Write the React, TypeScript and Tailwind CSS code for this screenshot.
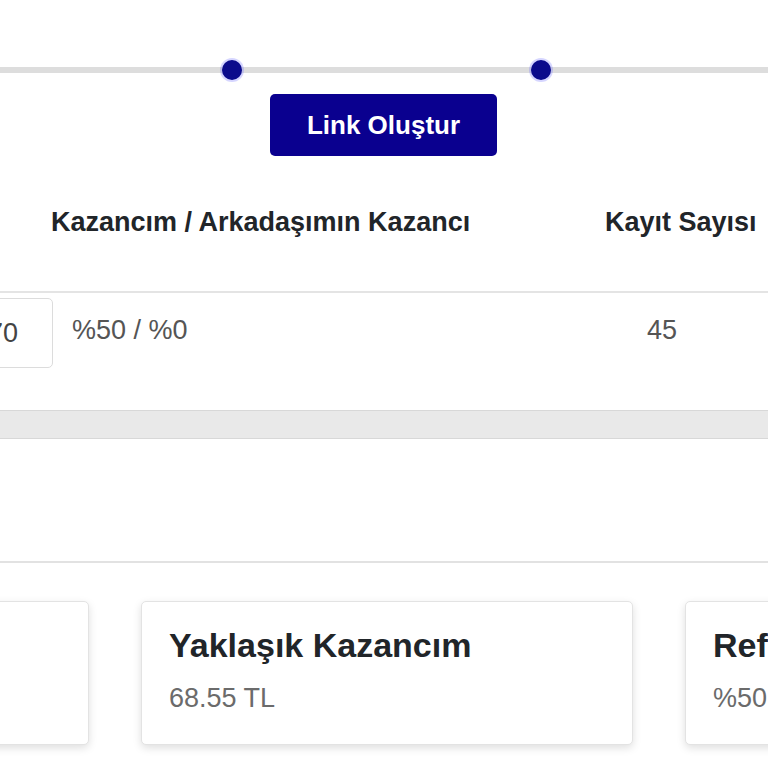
import React from "react";

export default function App() {
  return (
    <div
      className="w-[768px] h-[768px] overflow-hidden bg-white"
      style={{ fontFamily: '"Liberation Sans", Arial, sans-serif' }}
    >
      {/* slider */}
      <div className="pt-[67px]">
        <div className="relative h-[6px] bg-[#dddddd]">
          <span className="absolute left-[222px] top-[-7px] w-5 h-5 rounded-full bg-[#0b0b8c] shadow-[0_0_0_2px_rgba(90,90,255,0.25)]" />
          <span className="absolute left-[531px] top-[-7px] w-5 h-5 rounded-full bg-[#0b0b8c] shadow-[0_0_0_2px_rgba(90,90,255,0.25)]" />
        </div>
      </div>

      {/* button */}
      <div className="mt-[21px] flex justify-center">
        <button className="w-[227px] h-[62px] ml-[-1px] rounded-[5px] bg-[#0a008f] text-white font-bold text-[26px] leading-none">
          Link Oluştur
        </button>
      </div>

      {/* table header */}
      <div className="flex pl-[51px] pt-[50px] pb-[53px] text-[27px] leading-[32px] font-bold text-[#212529] whitespace-nowrap">
        <div className="w-[554px] shrink-0">Kazancım / Arkadaşımın Kazancı</div>
        <div className="shrink-0">Kayıt Sayısı</div>
      </div>
      <div className="h-[2px] bg-[#e4e4e4]" />

      {/* table row */}
      <div className="flex items-start h-[117px] whitespace-nowrap text-[27px] leading-[40px] text-[#555555]">
        <div className="shrink-0 ml-[-60px] mt-[5px] w-[113px] h-[70px] rounded-[5px] border border-[#dcdcdc] flex items-center pl-[47px] text-[#444]">
          70
        </div>
        <div className="shrink-0 ml-[19px] mt-[17px] w-[575px]">%50 / %0</div>
        <div className="shrink-0 mt-[17px]">45</div>
      </div>

      {/* gray bar */}
      <div className="h-[29px] bg-[#e9e9e9] border-y border-[#d8d8d8]" />

      {/* spacer and rule */}
      <div className="h-[122px]" />
      <div className="h-[2px] bg-[#e2e2e2]" />

      {/* cards */}
      <div className="flex gap-[52px] ml-[-403px] mt-[38px] whitespace-nowrap">
        {[
          { t: "", v: "" },
          { t: "Yaklaşık Kazancım", v: "68.55 TL" },
          { t: "Referans Oranım", v: "%50 / %0" },
        ].map((c, i) => (
          <div
            key={i}
            className="shrink-0 w-[492px] h-[144px] rounded-[5px] border border-[#e3e3e3] bg-white shadow-[0_3px_8px_rgba(0,0,0,0.13)] pl-[27px] pt-[23px]"
          >
            <div className="h-[40px] text-[34px] leading-[40px] font-bold text-[#212529]">{c.t}</div>
            <div className="h-[40px] mt-[13px] text-[27px] leading-[40px] text-[#6b6b6b]">{c.v}</div>
          </div>
        ))}
      </div>
    </div>
  );
}
